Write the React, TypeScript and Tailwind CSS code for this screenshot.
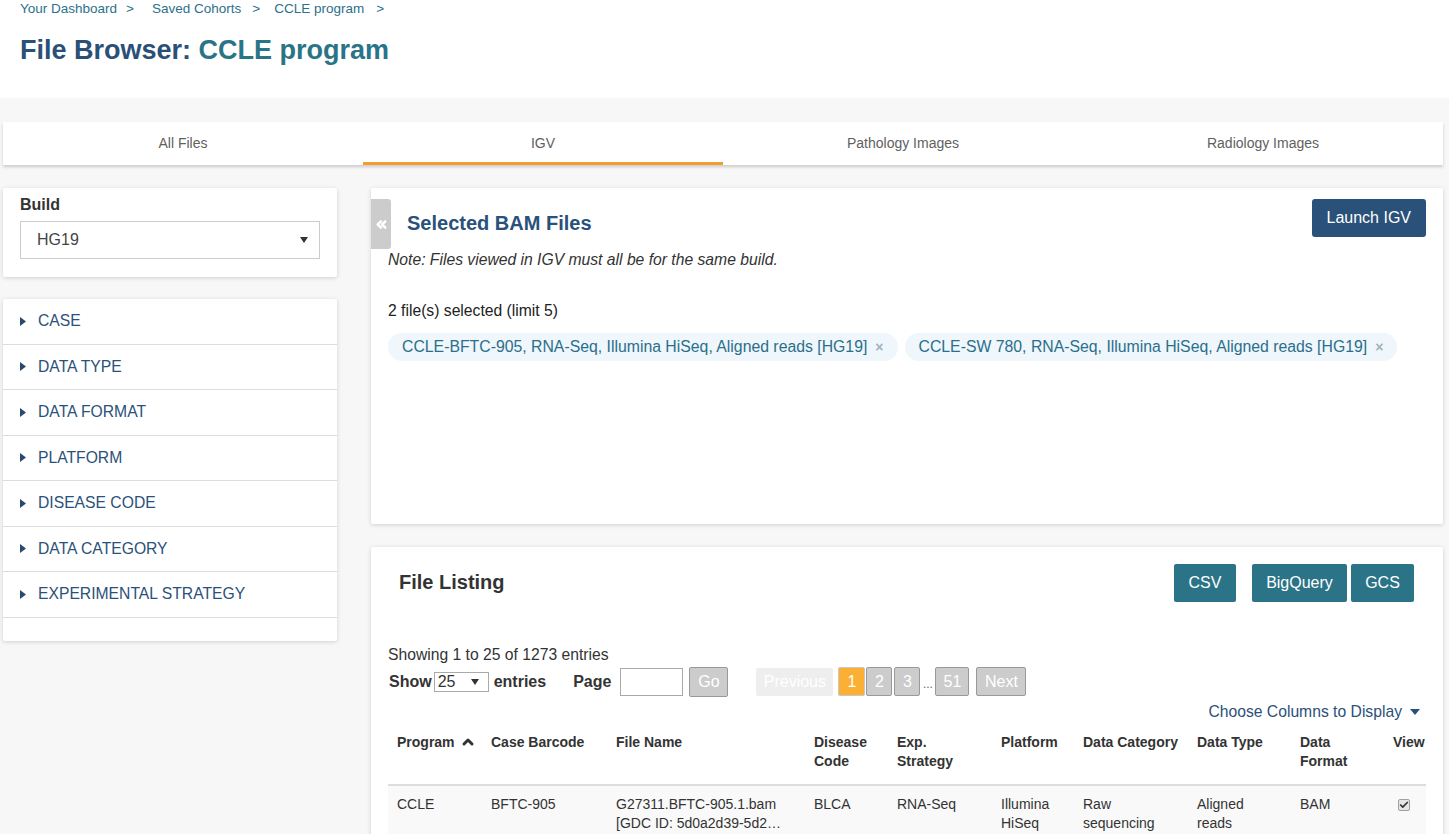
import React from 'react';
import { ChevronsLeft, ChevronUp, Check } from 'lucide-react';

const tabs = ['All Files', 'IGV', 'Pathology Images', 'Radiology Images'];

const facets = [
  'CASE',
  'DATA TYPE',
  'DATA FORMAT',
  'PLATFORM',
  'DISEASE CODE',
  'DATA CATEGORY',
  'EXPERIMENTAL STRATEGY',
];

const chips = [
  'CCLE-BFTC-905, RNA-Seq, Illumina HiSeq, Aligned reads [HG19]',
  'CCLE-SW 780, RNA-Seq, Illumina HiSeq, Aligned reads [HG19]',
];

const columns: { label: string[]; w: number; sort?: boolean }[] = [
  { label: ['Program'], w: 94, sort: true },
  { label: ['Case Barcode'], w: 125 },
  { label: ['File Name'], w: 198 },
  { label: ['Disease', 'Code'], w: 83 },
  { label: ['Exp.', 'Strategy'], w: 104 },
  { label: ['Platform'], w: 82 },
  { label: ['Data Category'], w: 114 },
  { label: ['Data Type'], w: 103 },
  { label: ['Data', 'Format'], w: 93 },
  { label: ['View'], w: 42 },
];

const rows = [
  {
    program: 'CCLE',
    barcode: 'BFTC-905',
    file: ['G27311.BFTC-905.1.bam', '[GDC ID: 5d0a2d39-5d2…'],
    disease: 'BLCA',
    strategy: 'RNA-Seq',
    platform: ['Illumina', 'HiSeq'],
    category: ['Raw', 'sequencing', 'data'],
    type: ['Aligned', 'reads'],
    format: 'BAM',
    checked: true,
  },
  {
    program: 'CCLE',
    barcode: 'SW 780',
    file: ['G27311.SW 780.1.bam', '[GDC ID: 8a1c6e20-9b4…'],
    disease: 'BLCA',
    strategy: 'RNA-Seq',
    platform: ['Illumina', 'HiSeq'],
    category: ['Raw', 'sequencing', 'data'],
    type: ['Aligned', 'reads'],
    format: 'BAM',
    checked: true,
  },
];

const Caret = () => (
  <svg width="6" height="9" viewBox="0 0 6 9" className="shrink-0">
    <polygon points="0,0 6,4.5 0,9" fill="#2a4a6b" />
  </svg>
);

const DownTri = ({ className = '' }: { className?: string }) => (
  <svg width="8" height="6" viewBox="0 0 8 6" className={className}>
    <polygon points="0,0 8,0 4,6" fill="#333" />
  </svg>
);

const Cell = ({ lines }: { lines: string[] }) => (
  <>
    {lines.map((l) => (
      <div key={l}>{l}</div>
    ))}
  </>
);

export default function App() {
  return (
    <div className="min-h-screen bg-[#f7f7f7] font-['Liberation_Sans',Arial,sans-serif] text-[#333]">
      {/* header */}
      <div className="bg-white h-[98px] px-[20px]">
        <div className="flex items-center h-[18px] text-[13.5px] text-[#2c718a]">
          <span>Your Dashboard</span>
          <span className="ml-[9px] mr-[18px]">&gt;</span>
          <span>Saved Cohorts</span>
          <span className="ml-[11px] mr-[14px]">&gt;</span>
          <span>CCLE program</span>
          <span className="ml-[12px]">&gt;</span>
        </div>
        <h1 className="mt-[16px] h-[32px] leading-[32px] text-[27px] font-bold text-[#2a5078]">
          File Browser: <span className="text-[#2a7488]">CCLE program</span>
        </h1>
      </div>

      <div className="pt-[24px] pl-[3px] w-[1443px]">
        {/* tabs */}
        <div className="flex h-[43px] bg-white shadow-[0_2px_3px_rgba(0,0,0,0.18)]">
          {tabs.map((t) => (
            <div
              key={t}
              className={`flex-1 flex items-center justify-center text-[14px] text-[#5f5f5f] ${
                t === 'IGV' ? 'border-b-[3px] border-[#f49d2b] pt-[3px]' : ''
              }`}
            >
              {t}
            </div>
          ))}
        </div>

        <div className="flex gap-[34px] mt-[23px] items-start">
          {/* left column */}
          <div className="w-[334px] shrink-0">
            <div className="bg-white h-[89px] px-[17px] pt-[7px] shadow-[0_1px_4px_rgba(0,0,0,0.16)] rounded-[2px]">
              <div className="text-[16px] font-bold leading-[20px] text-[#333]">Build</div>
              <div className="mt-[6px] h-[38px] border border-[#ccc] flex items-center justify-between pl-[16px] pr-[11px] text-[16px] text-[#444]">
                <span>HG19</span>
                <DownTri />
              </div>
            </div>

            <div className="mt-[22px] bg-white h-[342px] shadow-[0_1px_4px_rgba(0,0,0,0.16)] rounded-[2px]">
              {facets.map((f) => (
                <div
                  key={f}
                  className="h-[45.5px] border-b border-[#ddd] flex items-center pl-[17px] gap-[12px] text-[15.7px] text-[#2a5179]"
                >
                  <Caret />
                  <span>{f}</span>
                </div>
              ))}
            </div>
          </div>

          {/* right column */}
          <div className="flex-1 min-w-0">
            <div className="bg-white h-[336px] pt-[11px] pr-[17px] shadow-[0_1px_4px_rgba(0,0,0,0.16)] rounded-[2px]">
              <div className="flex items-start justify-between">
                <div className="flex items-center h-[50px]">
                  <div className="w-[20px] h-[50px] bg-[#cccccc] rounded-r-[3px] flex items-center justify-center">
                    <ChevronsLeft size={15} strokeWidth={4} color="#fff" />
                  </div>
                  <h2 className="ml-[16px] -mt-[2px] text-[20px] font-bold text-[#2a5179]">Selected BAM Files</h2>
                </div>
                <button className="h-[38px] px-[15px] bg-[#2a5179] text-white text-[16px] rounded-[3px]">
                  Launch IGV
                </button>
              </div>
              <div className="pl-[17px]">
                <div className="leading-[22px] text-[15.7px] italic text-[#333]">
                  Note: Files viewed in IGV must all be for the same build.
                </div>
                <div className="mt-[29px] leading-[22px] text-[15.7px] text-[#222]">2 file(s) selected (limit 5)</div>
                <div className="mt-[11px] flex gap-[7px]">
                  {chips.map((c) => (
                    <div
                      key={c}
                      className="h-[28px] flex items-center pl-[14px] pr-[14px] rounded-full bg-[#eff6fc] text-[15.8px] text-[#2b6f8a]"
                    >
                      <span>{c}</span>
                      <span className="ml-[8px] text-[14px] font-bold text-[#9fb3be]">×</span>
                    </div>
                  ))}
                </div>
              </div>
            </div>

            {/* file listing */}
            <div className="mt-[23px] bg-white pt-[17px] pb-[40px] shadow-[0_1px_4px_rgba(0,0,0,0.16)] rounded-[2px]">
              <div className="flex items-center justify-between pl-[28px] pr-[29px] h-[38px]">
                <h2 className="-mt-[3px] text-[20px] font-bold text-[#333]">File Listing</h2>
                <div className="flex">
                  <button className="h-[38px] w-[62px] bg-[#2b7387] text-white text-[16px] rounded-[2px]">CSV</button>
                  <button className="ml-[16px] h-[38px] w-[95px] bg-[#2b7387] text-white text-[16px] rounded-[2px]">
                    BigQuery
                  </button>
                  <button className="ml-[4px] h-[38px] w-[63px] bg-[#2b7387] text-white text-[16px] rounded-[2px]">GCS</button>
                </div>
              </div>

              <div className="px-[17px]">
                <div className="mt-[42px] leading-[22px] text-[15.7px] text-[#333]">Showing 1 to 25 of 1273 entries</div>

                <div className="flex items-center h-[31px] text-[16px]">
                  <span className="font-bold ml-[1px]">Show</span>
                  <div className="ml-[2px] w-[55px] h-[20px] border border-[#aaa] flex items-center justify-between pl-[3px] pr-[9px] leading-none">
                    <span>25</span>
                    <DownTri />
                  </div>
                  <span className="font-bold ml-[5px]">entries</span>
                  <span className="font-bold ml-[27px]">Page</span>
                  <div className="ml-[9px] w-[63px] h-[28px] border border-[#aaa] bg-white" />
                  <button className="ml-[6px] w-[39px] h-[30px] bg-[#ccc] border border-[#999] rounded-[2px] text-white">
                    Go
                  </button>
                  <button className="ml-[28px] w-[77px] h-[28px] bg-[#eeeeee] rounded-[2px] text-white">Previous</button>
                  <button className="ml-[5px] w-[27px] h-[29px] bg-[#fbb034] border border-[#c8c8c8] rounded-[2px] text-white">
                    1
                  </button>
                  <button className="ml-[1px] w-[26px] h-[29px] bg-[#ccc] border border-[#999] rounded-[2px] text-white">2</button>
                  <button className="ml-[2px] w-[26px] h-[29px] bg-[#ccc] border border-[#999] rounded-[2px] text-white">3</button>
                  <span className="w-[15px] text-center text-[12px] text-[#666] self-end mb-[4px]">...</span>
                  <button className="w-[34px] h-[29px] bg-[#ccc] border border-[#999] rounded-[2px] text-white">51</button>
                  <button className="ml-[7px] w-[50px] h-[29px] bg-[#ccc] border border-[#999] rounded-[2px] text-white">
                    Next
                  </button>
                </div>

                <div className="mt-[4px] flex justify-end items-center pr-[6px] leading-[22px] text-[15.7px] text-[#2a5179]">
                  <span>Choose Columns to Display</span>
                  <svg width="10" height="6" viewBox="0 0 10 6" className="ml-[8px]">
                    <polygon points="0,0 10,0 5,6" fill="#2a5179" />
                  </svg>
                </div>

                <table className="w-[1038px] table-fixed border-collapse text-[14px] leading-[19px]">
                  <colgroup>
                    {columns.map((c, i) => (
                      <col key={i} style={{ width: c.w }} />
                    ))}
                  </colgroup>
                  <thead>
                    <tr className="border-b-2 border-[#ddd]">
                      {columns.map((c, i) => (
                        <th key={i} className="text-left align-top font-bold text-[#333] pl-[9px] pt-[10px] pb-[13px]">
                          <div className="flex items-start">
                            <div>
                              {c.label.map((l) => (
                                <div key={l} className="whitespace-nowrap">
                                  {l}
                                </div>
                              ))}
                            </div>
                            {c.sort && <ChevronUp size={16} strokeWidth={4.5} className="ml-[5px] mt-[1px]" color="#333" />}
                          </div>
                        </th>
                      ))}
                    </tr>
                  </thead>
                  <tbody>
                    {rows.map((r, i) => (
                      <tr key={i} className={`${i % 2 === 0 ? 'bg-[#f9f9f9]' : 'bg-white'} border-b border-[#e5e5e5]`}>
                        <td className="align-top pl-[9px] pt-[9px] pb-[8px]">{r.program}</td>
                        <td className="align-top pl-[9px] pt-[9px]">{r.barcode}</td>
                        <td className="align-top pl-[9px] pt-[9px] pr-[4px]">
                          <div className="truncate">{r.file[0]}</div>
                          <div className="truncate">{r.file[1]}</div>
                        </td>
                        <td className="align-top pl-[9px] pt-[9px]">{r.disease}</td>
                        <td className="align-top pl-[9px] pt-[9px]">{r.strategy}</td>
                        <td className="align-top pl-[9px] pt-[9px]">
                          <Cell lines={r.platform} />
                        </td>
                        <td className="align-top pl-[9px] pt-[9px]">
                          <Cell lines={r.category} />
                        </td>
                        <td className="align-top pl-[9px] pt-[9px]">
                          <Cell lines={r.type} />
                        </td>
                        <td className="align-top pl-[9px] pt-[9px]">{r.format}</td>
                        <td className="align-top pl-[14px] pt-[13px]">
                          <div className="w-[12px] h-[12px] border border-[#a0a0a0] rounded-[2px] bg-[#e6e6e6] flex items-center justify-center">
                            {r.checked && <Check size={10} strokeWidth={4} color="#333" />}
                          </div>
                        </td>
                      </tr>
                    ))}
                  </tbody>
                </table>
              </div>
            </div>
          </div>
        </div>
      </div>
    </div>
  );
}
